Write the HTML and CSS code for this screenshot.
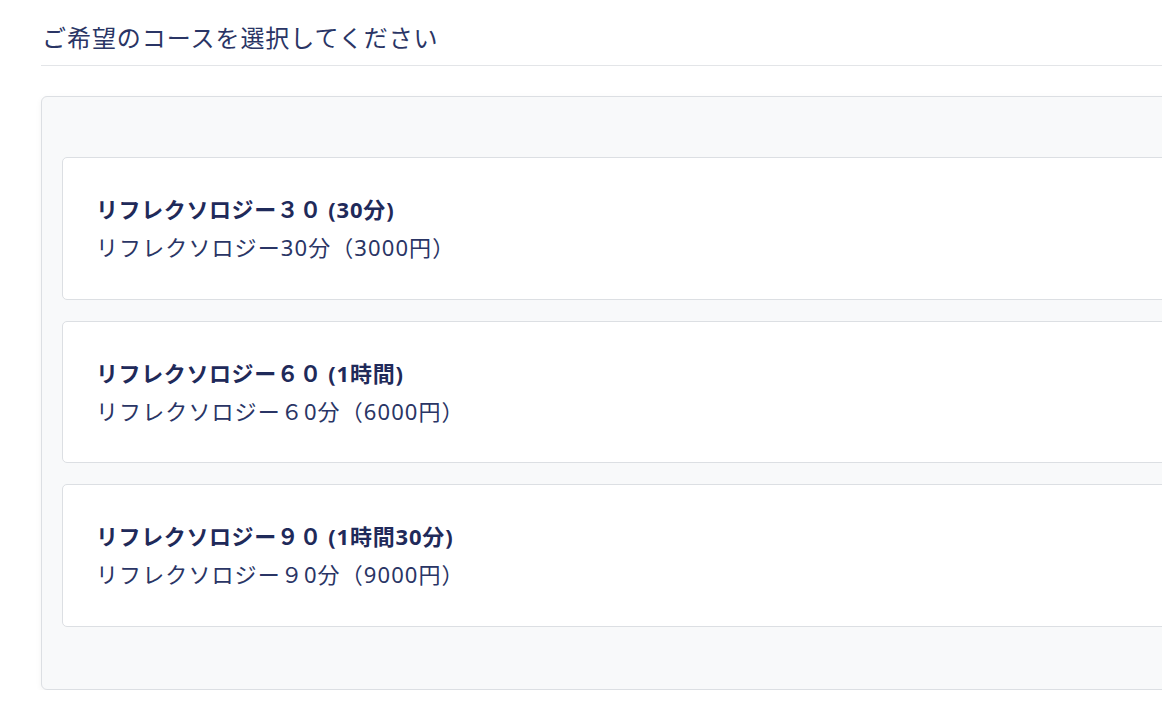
FILE: index.html
```html
<!DOCTYPE html>
<html lang="ja">
  <head>
    <meta charset="utf-8">
    <title>コース選択</title>
    <link rel="stylesheet" href="styles.css">
  </head>
  <body>
    <div class="page">
      <!-- Course selection -->
      <h2 class="section-title">ご希望のコースを選択してください</h2>

      <div class="course-panel">
        <div class="course-card">
          <div class="course-name">リフレクソロジー３０ <span class="course-time">(30分)</span></div>
          <div class="course-desc">リフレクソロジー30分（3000円）</div>
        </div>
        <div class="course-card">
          <div class="course-name">リフレクソロジー６０ <span class="course-time">(1時間)</span></div>
          <div class="course-desc">リフレクソロジー６0分（6000円）</div>
        </div>
        <div class="course-card">
          <div class="course-name">リフレクソロジー９０ <span class="course-time">(1時間30分)</span></div>
          <div class="course-desc">リフレクソロジー９0分（9000円）</div>
        </div>
      </div>
    </div>
  </body>
</html>
```
FILE: styles.css
```css
body {
  margin: 0;
  background-color: #fff;
  font-family: "Noto Sans", "Noto Sans CJK JP", sans-serif;
  color: #24305e;
  overflow: hidden;
}

.page {
  width: 1300px;
  padding: 21px 0 0 41px;
}

.section-title {
  margin: 0;
  padding: 0 0 10px 1px;
  font-size: 24px;
  font-weight: 400;
  letter-spacing: 0.95px;
  line-height: 34px;
  color: #2a3565;
  border-bottom: 1px solid #e3e5e8;
}

.course-panel {
  margin-top: 30px;
  padding: 60px 20px 62px 20px;
  background: #f8f9fa;
  border: 1px solid #dcdfe3;
  border-radius: 6px;
  box-shadow: 0 2px 6px #0000000d;
  display: flex;
  flex-direction: column;
  gap: 21px;
}

.course-card {
  height: 142.5px;
  box-sizing: border-box;
  background: #fff;
  border: 1px solid #dcdfe3;
  border-radius: 5px;
  padding: 35px 33px 34px 33px;
}

.course-name {
  font-size: 22px;
  font-weight: 700;
  line-height: 33px;
  letter-spacing: 0.6px;
  color: #1f2a5a;
}

.course-time {
  letter-spacing: 0.8px;
}

.course-desc {
  margin-top: 5px;
  font-size: 22px;
  line-height: 33px;
  letter-spacing: 1.1px;
  color: #2a3565;
}
```
